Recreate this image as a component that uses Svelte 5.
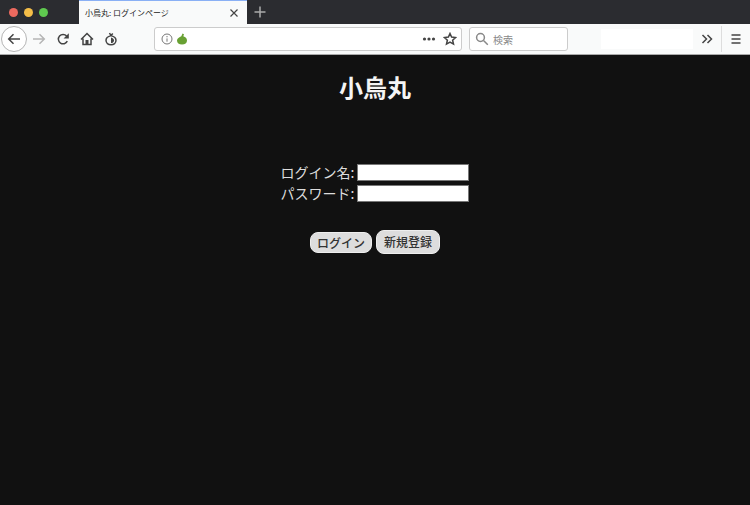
<script lang="ts">
  let address = $state('');
  let search = $state('');
  let loginName = $state('');
  let password = $state('');

  function handleSubmit(e: Event) {
    e.preventDefault();
    password = '';
  }
</script>

<div class="browser">
  <header class="titlebar">
    <div class="lights">
      <button type="button" class="light close" aria-label="閉じる"></button>
      <button type="button" class="light minimize" aria-label="最小化"></button>
      <button type="button" class="light zoom" aria-label="拡大"></button>
    </div>
    <div class="tab">
      <span class="tab-title">小烏丸: ログインページ</span>
      <button type="button" class="icon-button tab-close" aria-label="タブを閉じる">
        <svg width="10" height="10" viewBox="0 0 10 10"><path d="M1.500 1.500l7 7M8.500 1.500l-7 7" /></svg>
      </button>
    </div>
    <button type="button" class="icon-button new-tab" aria-label="新しいタブ">
      <svg width="12" height="12" viewBox="0 0 12 12"><path d="M6 .5v11M.5 6h11" /></svg>
    </button>
  </header>

  <nav class="toolbar">
    <div class="nav-buttons">
      <button type="button" class="icon-button back" aria-label="戻る">
        <svg width="14" height="14" viewBox="0 0 14 14"><path d="M13 7H2M6.5 2.2L1.7 7l4.8 4.8" /></svg>
      </button>
      <button type="button" class="icon-button forward" aria-label="進む" disabled>
        <svg width="14" height="14" viewBox="0 0 14 14"><path d="M1 7h11M7.5 2.2L12.3 7l-4.8 4.8" /></svg>
      </button>
      <button type="button" class="icon-button" aria-label="再読み込み">
        <svg width="14" height="14" viewBox="0 0 14 14">
          <path d="M11.3 9.2A4.7 4.7 0 1 1 10.6 4" />
          <path class="solid" d="M12.8 1.3v5.2H7.6z" />
        </svg>
      </button>
      <button type="button" class="icon-button" aria-label="ホーム">
        <svg width="14" height="14" viewBox="0 0 14 14">
          <path d="M1 7.5l6-6 6 6M3 6.5v6h8v-6" />
          <path class="solid" d="M5.5 8h3v4.5h-3z" />
        </svg>
      </button>
      <button type="button" class="icon-button" aria-label="Tor">
        <svg width="14" height="14" viewBox="0 0 14 14">
          <path d="M5.500 1l1.500 2.600C4.400 4.300 2 5.400 2 8.300c0 2.700 2.200 4.500 5 4.500s5-1.800 5-4.500C12 5.400 9.600 4.300 7 3.600L8.800 1.600" />
          <path class="solid" d="M7 5.500c2 .6 3 1.500 3 2.900S8.800 11 7 11z" />
        </svg>
      </button>
    </div>

    <div class="address">
      <svg class="info" width="12" height="12" viewBox="0 0 12 12">
        <circle cx="6" cy="6" r="5" />
        <path d="M6 5.400v3.300M6 3v1.300" />
      </svg>
      <svg class="onion" width="12" height="12" viewBox="0 0 12 12">
        <path d="M6.500.6L8 1.200 7.300 3.300C9.500 4.200 11 5.200 11 7.500 11 10 9 11.600 6 11.600S1 10 1 7.500C1 5.200 3.500 4.200 5.300 3.200z" />
      </svg>
      <input type="text" bind:value={address} aria-label="アドレス" />
      <button type="button" class="icon-button" aria-label="ページ操作">
        <svg class="dots" width="14" height="14" viewBox="0 0 14 14">
          <circle cx="2.500" cy="7" r="1.600" />
          <circle cx="7" cy="7" r="1.600" />
          <circle cx="11.500" cy="7" r="1.600" />
        </svg>
      </button>
      <button type="button" class="icon-button" aria-label="ブックマーク">
        <svg width="14" height="14" viewBox="0 0 14 14">
          <path d="M7 1.500l1.600 3.600 4 .4-3 2.700.9 3.900L7 10.100l-3.500 2 .9-3.900-3-2.700 4-.4z" />
        </svg>
      </button>
    </div>

    <div class="search">
      <svg width="14" height="14" viewBox="0 0 14 14">
        <circle cx="5.500" cy="5.500" r="3.900" />
        <path d="M8.500 8.500l4.300 4.300" />
      </svg>
      <input type="text" bind:value={search} placeholder="検索" aria-label="検索" />
    </div>

    <div class="extensions"></div>

    <button type="button" class="icon-button overflow" aria-label="その他のツール">
      <svg width="12" height="12" viewBox="0 0 12 12"><path d="M1.500 2l4 4-4 4M6.500 2l4 4-4 4" /></svg>
    </button>
    <button type="button" class="icon-button menu" aria-label="メニュー">
      <svg width="10" height="10" viewBox="0 0 10 10"><path d="M.5 1h9M.5 5h9M.5 9h9" /></svg>
    </button>
  </nav>

  <main>
    <h1>小烏丸</h1>
    <form onsubmit={handleSubmit}>
      <div class="fields">
        <label for="login-name">ログイン名:</label>
        <input type="text" id="login-name" bind:value={loginName} />
        <label for="password">パスワード:</label>
        <input type="password" id="password" bind:value={password} />
      </div>
      <div class="actions">
        <button type="submit" class="action">ログイン</button>
        <button type="button" class="action register">新規登録</button>
      </div>
    </form>
  </main>
</div>

<style>
  :global(body) {
    margin: 0;
    background: #111;
  }

  .browser {
    display: flex;
    flex-direction: column;
    min-height: 100vh;
    font-family: 'Noto Sans CJK JP', sans-serif;
  }

  button,
  input {
    box-sizing: border-box;
    font-family: inherit;
  }

  .titlebar {
    display: flex;
    height: 24px;
    background: #2b2c30;
  }

  .lights {
    display: flex;
    align-items: center;
    gap: 6px;
    box-sizing: border-box;
    width: 79px;
    padding-left: 9px;
  }

  .light {
    width: 9px;
    height: 9px;
    padding: 0;
    border: none;
    border-radius: 50%;
  }

  .close {
    background: #ed6a5f;
  }

  .minimize {
    background: #f5be48;
  }

  .zoom {
    background: #5fc94f;
  }

  .tab {
    display: flex;
    align-items: center;
    justify-content: space-between;
    box-sizing: border-box;
    width: 168px;
    padding: 0 6px;
    border-top: 1px solid #8ab0f5;
    background: #f9fafa;
  }

  .tab-title {
    color: #222;
    font-size: 8px;
    line-height: 12px;
    white-space: nowrap;
  }

  .icon-button {
    display: flex;
    align-items: center;
    justify-content: center;
    flex-shrink: 0;
    padding: 0;
    border: none;
    background: none;
    color: #444;
  }

  svg {
    flex-shrink: 0;
    fill: none;
    stroke: currentColor;
    stroke-width: 1.5;
  }

  .solid {
    fill: currentColor;
    stroke: none;
  }

  .tab-close {
    width: 14px;
  }

  .tab-close svg {
    stroke-width: 1.2;
  }

  .new-tab {
    width: 26px;
    color: #aaa;
  }

  .toolbar {
    display: flex;
    align-items: center;
    box-sizing: border-box;
    height: 31px;
    padding-left: 1px;
    border-bottom: 1px solid #aaa;
    background: #f9fafa;
  }

  .nav-buttons {
    display: flex;
    align-items: center;
    width: 153px;
  }

  .nav-buttons .icon-button {
    width: 24px;
    height: 26px;
  }

  .nav-buttons .back {
    width: 26px;
    border: 1px solid #b5b5b5;
    border-radius: 50%;
    background: #fff;
  }

  .nav-buttons .forward {
    color: #b5b5b5;
  }

  .address,
  .search {
    display: flex;
    align-items: center;
    box-sizing: border-box;
    height: 24px;
    border: 1px solid #ccc;
    border-radius: 3px;
    background: #fff;
  }

  .address {
    flex: 1;
    padding: 0 1px 0 6px;
  }

  .address input,
  .search input {
    flex: 1;
    min-width: 0;
    height: 20px;
    padding: 0 4px;
    border: none;
    outline: none;
    background: none;
    color: #333;
    font-size: 10px;
  }

  .address .icon-button {
    width: 21px;
  }

  .info {
    margin-right: 3px;
    color: #777;
    stroke-width: 1;
  }

  .onion {
    fill: #68a033;
    stroke: none;
  }

  .dots {
    fill: currentColor;
    stroke: none;
  }

  .search {
    width: 99px;
    margin-left: 7px;
    padding-left: 5px;
    color: #888;
  }

  .search input::placeholder {
    color: #888;
    opacity: 1;
  }

  .extensions {
    width: 92px;
    height: 20px;
    margin-left: 33px;
    background: #fff;
  }

  .overflow {
    width: 28px;
    height: 26px;
  }

  .menu {
    width: 29px;
    height: 26px;
    border-left: 1px solid #ddd;
  }

  main {
    display: flex;
    flex: 1;
    flex-direction: column;
    align-items: center;
    padding-top: 14px;
    background: #111;
    color: #ddd;
  }

  h1 {
    margin: 0;
    color: #f4f4f4;
    font-size: 24px;
    line-height: 36px;
  }

  form {
    display: flex;
    flex-direction: column;
    align-items: center;
    margin-top: 57px;
  }

  .fields {
    display: grid;
    grid-template-columns: auto auto;
    align-items: center;
    gap: 1px 3px;
  }

  label {
    font-size: 14px;
    line-height: 20px;
    white-space: nowrap;
  }

  .fields input {
    width: 112px;
    height: 17px;
    padding: 1px 2px;
    border: 1px solid #777;
    background: #fff;
    color: #111;
    font-size: 11px;
  }

  .actions {
    display: flex;
    align-items: center;
    gap: 4px;
    margin-top: 27px;
  }

  .action {
    padding: 2px 6px;
    border: 1px solid #eee;
    border-radius: 8px;
    background: #ddd;
    color: #333;
    font-size: 12px;
    font-weight: 500;
    line-height: 15px;
  }

  .register {
    padding: 3px 7px;
    line-height: 16px;
  }
</style>
